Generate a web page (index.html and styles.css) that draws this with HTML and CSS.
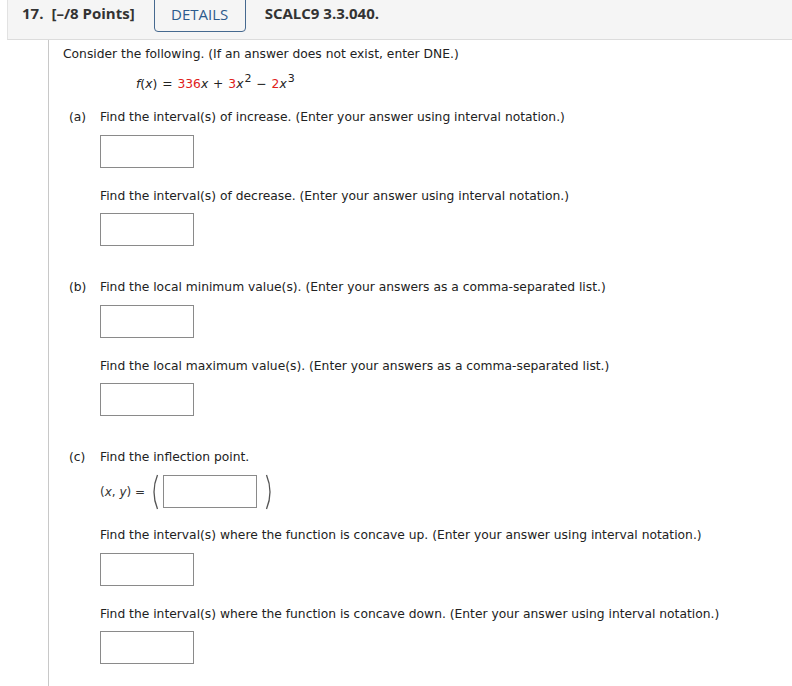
FILE: index.html
```html
<!DOCTYPE html>
<html>
<head>
<meta charset="utf-8">
<link rel="stylesheet" href="styles.css">
</head>
<body>
<div class="header">
  <span class="qnum">17.</span>
  <span class="pts">[–/8 Points]</span>
  <span class="details">DETAILS</span>
  <span class="code">SCALC9 3.3.040.</span>
</div>
<div class="content">
  <p class="line intro">Consider the following. (If an answer does not exist, enter DNE.)</p>
  <p class="line eq"><i>f</i>(<i>x</i>) <span class="op">=</span> <span class="red">336</span><i>x</i> <span class="op">+</span> <span class="red">3</span><i>x</i><sup>2</sup> <span class="op">−</span> <span class="red">2</span><i>x</i><sup>3</sup></p>

  <div class="part">
    <span class="plabel">(a)</span>
    <div class="pbody">
      <p class="line">Find the interval(s) of increase. (Enter your answer using interval notation.)</p>
      <div class="box"></div>
      <p class="line next">Find the interval(s) of decrease. (Enter your answer using interval notation.)</p>
      <div class="box"></div>
    </div>
  </div>

  <div class="part">
    <span class="plabel">(b)</span>
    <div class="pbody">
      <p class="line">Find the local minimum value(s). (Enter your answers as a comma-separated list.)</p>
      <div class="box"></div>
      <p class="line next">Find the local maximum value(s). (Enter your answers as a comma-separated list.)</p>
      <div class="box"></div>
    </div>
  </div>

  <div class="part">
    <span class="plabel">(c)</span>
    <div class="pbody">
      <p class="line">Find the inflection point.</p>
      <div class="pointrow">
        <span class="xy">(<i>x</i>, <i>y</i>) =</span>
        <svg class="paren lp" width="9" height="36" viewBox="0 0 9 36"><path d="M7.5 1 Q0.5 18 7.5 35" fill="none" stroke="#555" stroke-width="1.3"/></svg>
        <div class="box inrow"></div>
        <svg class="paren rp" width="9" height="36" viewBox="0 0 9 36"><path d="M1.5 1 Q8.5 18 1.5 35" fill="none" stroke="#555" stroke-width="1.3"/></svg>
      </div>
      <p class="line next afterrow">Find the interval(s) where the function is concave up. (Enter your answer using interval notation.)</p>
      <div class="box"></div>
      <p class="line next">Find the interval(s) where the function is concave down. (Enter your answer using interval notation.)</p>
      <div class="box"></div>
    </div>
  </div>
</div>
</body>
</html>
```

FILE: styles.css
```css
html, body {
  margin: 0;
  padding: 0;
  background: #fff;
}

body {
  width: 792px;
  height: 686px;
  overflow: hidden;
}

.header {
  margin-left: 7px;
  height: 39px;
  background: #f5f5f5;
  border-left: 1px solid #e2e2e2;
  border-bottom: 1px solid #dcdcdc;
  display: flex;
  align-items: flex-start;
  padding-left: 14px;
  font-family: "Open Sans", "DejaVu Sans", sans-serif;
  font-size: 15px;
  line-height: 22px;
  color: #333;
}

.qnum, .pts, .code {
  font-weight: 700;
  margin-top: 2px;
}

.pts {
  margin-left: 8px;
}

.details {
  margin-left: 19px;
  margin-top: -6px;
  width: 90px;
  height: 34px;
  border: 1px solid #46698f;
  border-radius: 4px;
  display: flex;
  align-items: center;
  justify-content: center;
  padding-top: 2px;
  color: #2c5a8c;
  font-weight: 400;
}

.code {
  margin-left: 19px;
}

.content {
  margin-left: 48px;
  border-left: 1px solid #c8c8c8;
  padding-left: 14px;
  padding-top: 5px;
  height: 646px;
  box-sizing: border-box;
  font-family: "DejaVu Sans", Verdana, sans-serif;
  font-size: 12.3px;
  color: #222;
}

.line {
  margin: 0;
  padding-top: 1px;
  line-height: 16px;
  height: 15px;
  white-space: nowrap;
}

.eq {
  margin-top: 14px;
  padding-left: 73px;
}

.eq .op {
  padding: 0 1px;
}

.eq sup {
  font-size: 11px;
  line-height: 0;
  vertical-align: 6px;
  margin-left: 1px;
}

.red {
  color: #e0201a;
}

.part {
  display: flex;
  margin-top: 32px;
  padding-left: 6px;
}

.eq + .part {
  margin-top: 17px;
}

.plabel {
  width: 31px;
  flex: none;
  line-height: 16px;
  padding-top: 1px;
}

.pbody {
  display: flex;
  flex-direction: column;
  align-items: flex-start;
}

.box {
  margin-top: 11px;
  width: 92px;
  height: 31px;
  border: 1px solid #8a8a8a;
  background: #fff;
}

.next {
  margin-top: 19px;
}

.next + .box {
  margin-top: 10px;
}

.pointrow {
  display: flex;
  align-items: center;
  margin-top: 10px;
  height: 35px;
}

.next.afterrow {
  margin-top: 17px;
}

.next.afterrow + .box {
  margin-top: 11px;
}

.xy {
  font-size: 12px;
  color: #333;
  line-height: 16px;
  margin-right: 5px;
}

.paren {
  display: block;
}

.box.inrow {
  margin: 0 8px 0 4px;
}
```
